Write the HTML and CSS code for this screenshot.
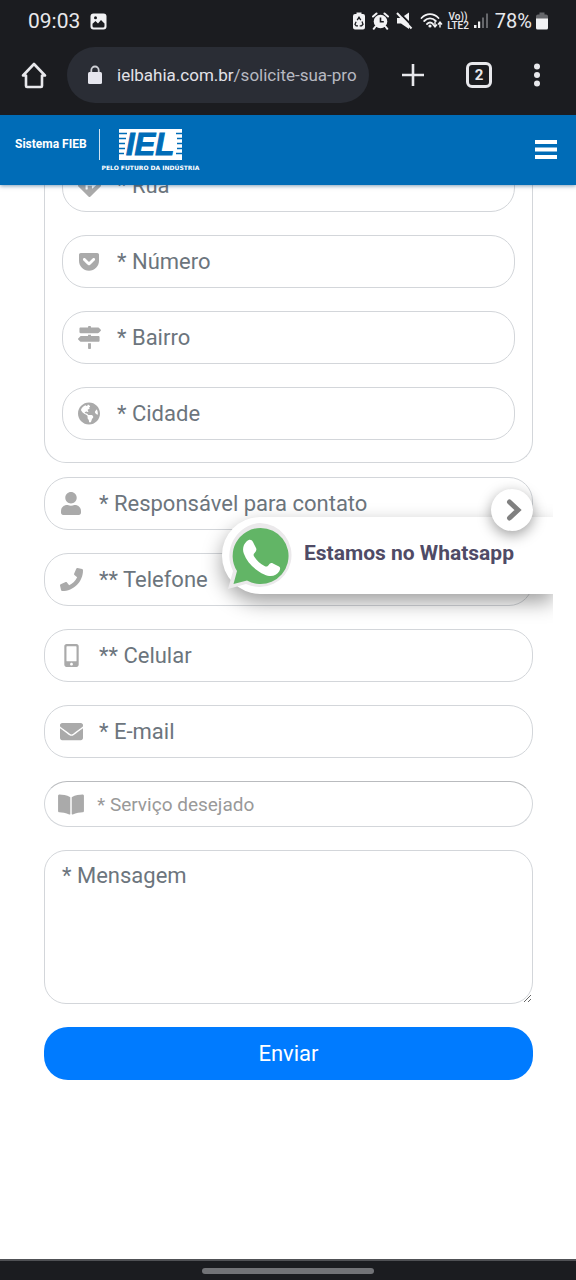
FILE: index.html
```html
<!DOCTYPE html>
<html lang="pt-BR">
<head>
<meta charset="utf-8">
<meta name="viewport" content="width=device-width, initial-scale=1">
<title>Solicite sua proposta</title>
<link rel="stylesheet" href="styles.css">
</head>
<body>
<div class="chrome">
  <div class="status">
    <span class="clock">09:03</span>
    <svg class="status-photo" width="17" height="17" viewBox="0 0 17 17"><rect x=".5" y=".5" width="16" height="16" rx="3" fill="#f2f2f4"/><path d="M2.500 12.500V10.800L5.500 8l2.500 2.500 3-3.500 3.500 3.500v2.500a1.500 1.500 0 0 1-1.500 1.500H4a1.500 1.500 0 0 1-1.500-1.500z" fill="#1b1c20"/><circle cx="5.500" cy="4.800" r="1.500" fill="#1b1c20"/></svg>
    <div class="status-icons">
      <svg width="12" height="18" viewBox="0 0 12 18"><path d="M3.500 2V.5h5V2H10a2 2 0 0 1 2 2v11.500a2 2 0 0 1-2 2H2a2 2 0 0 1-2-2V4a2 2 0 0 1 2-2z" fill="#f2f2f4"/><path d="M4.200 8.200L6 5.300l1.800 2.900M9 9.600l1 2.700-1.400 1.500H6.700M5 13.800H3.200L2 12.300l1.100-2.500" fill="none" stroke="#1b1c20" stroke-width="1.300"/></svg>
      <svg width="17" height="18" viewBox="0 0 17 18"><circle cx="8.500" cy="9.500" r="6.800" fill="#f2f2f4"/><path d="M1 4.500L4.500 1.500M16 4.500L12.500 1.500M3.500 14.500L1.700 16.800M13.500 14.500l1.800 2.300" stroke="#f2f2f4" stroke-width="2" stroke-linecap="round"/><path d="M8.500 5.500v4.300h3.300" fill="none" stroke="#1b1c20" stroke-width="1.600"/></svg>
      <svg width="17" height="18" viewBox="0 0 17 18"><path d="M1 6h4l8-5.500v16.500l-8-5.500H1z" fill="#f2f2f4"/><path d="M2.500 0L17 14.500" stroke="#1b1c20" stroke-width="2"/><path d="M1 1l14.500 15.500" stroke="#f2f2f4" stroke-width="2"/></svg>
      <svg width="23" height="18" viewBox="0 0 23 18"><g fill="none" stroke="#f2f2f4" stroke-width="1.800" stroke-linecap="round"><path d="M1.500 6C6.500 .8 13.500.8 18.500 6M4.200 9c3.500-3.600 8.100-3.600 11.600 0M7 12c2-2 4-2 6 0"/></g><circle cx="10" cy="14" r="1.600" fill="#f2f2f4"/><path d="M15 9.500v5M13 12.500l2 2.500 2-2.500M20 15.500v-5M18 12.500l2-2.500 2 2.500" fill="none" stroke="#f2f2f4" stroke-width="1.400"/></svg>
      <span class="volte"><span>Vo))</span><span>LTE2</span></span>
      <svg width="16" height="18" viewBox="0 0 16 18"><path d="M1 13h2.500v3H1zM5 9.500h2.200V16H5z" fill="#f2f2f4"/><path d="M9 5.500h2V16H9zM13 1.500h2V16h-2z" fill="#66676b"/></svg>
    </div>
    <span class="battery">78%</span>
    <svg width="12" height="18" viewBox="0 0 12 18"><path d="M3.500 2.500V.5h5v2H10a2 2 0 0 1 2 2V7H0V4.500a2 2 0 0 1 2-2z" fill="#66676b"/><path d="M0 6.500h12V16a1.500 1.500 0 0 1-1.500 1.500h-9A1.500 1.500 0 0 1 0 16z" fill="#f2f2f4"/></svg>
  </div>
  <div class="toolbar">
    <button type="button" aria-label="Página inicial"><svg width="28" height="28" viewBox="0 0 28 28"><path d="M3 14.500L14 3l11 11.500h-3V25a1 1 0 0 1-1 1H7a1 1 0 0 1-1-1V14.500z" fill="none" stroke="#e8e8ec" stroke-width="2.600" stroke-linejoin="round"/></svg></button>
    <div class="address">
      <svg width="16" height="20" viewBox="0 0 16 20"><path d="M4.300 8V5.200a3.700 3.700 0 0 1 7.400 0V8" fill="none" stroke="#cfd0d6" stroke-width="1.800"/><rect x="1" y="7" width="14" height="12" rx="1.500" fill="#e6e6ee"/></svg>
      <span class="url">ielbahia.com.br<span class="path">/solicite-sua-pro</span></span>
    </div>
    <div class="actions">
      <button type="button" aria-label="Nova guia"><svg width="24" height="24" viewBox="0 0 24 24"><path d="M12 1v22M1 12h22" stroke="#e8e8ec" stroke-width="2.600"/></svg></button>
      <button class="tabs" type="button" aria-label="2 guias abertas">2</button>
      <button type="button" aria-label="Mais opções"><svg width="8" height="24" viewBox="0 0 8 24"><g fill="#e8e8ec"><circle cx="4" cy="3.500" r="3"/><circle cx="4" cy="12" r="3"/><circle cx="4" cy="20.500" r="3"/></g></svg></button>
    </div>
  </div>
</div>

<header class="site-header">
  <a class="brand" href="#">
    <span class="system">Sistema FIEB</span>
    <span class="divider"></span>
    <span class="iel">
      <svg width="63" height="31" viewBox="0 0 63 31" role="img" aria-label="IEL"><path d="M0 0h63v31H0z" fill="#fff"/><path d="M0 4.500h8M0 9.500h7M0 14.500h6M0 19.500h6M0 24.500h5M57 4.500h6M58 9.500h5M58 14.500h5M58 19.500h5M57 24.500h6" stroke="#006cb7" stroke-width="1.600"/><text class="iel-letters" x="7" y="26">IEL</text></svg>
      <span class="tagline">PELO FUTURO DA INDÚSTRIA</span>
    </span>
  </a>
  <button type="button" aria-label="Menu"><svg width="22" height="20" viewBox="0 0 22 20"><path d="M0 2h22M0 9.500h22M0 17h22" stroke="#fff" stroke-width="4"/></svg></button>
</header>

<main class="page">
  <form class="form">
    <fieldset class="group">
      <label class="field"><span class="icon"><svg width="23" height="23" viewBox="0 0 512 512"><path d="M502.600 233.300L278.700 9.400a32 32 0 0 0-45.300 0L9.400 233.300a32 32 0 0 0 0 45.300l223.900 224a32 32 0 0 0 45.300 0l224-224a32 32 0 0 0 0-45.300zM408 243l-84 78c-5 5-14 1-14-6v-53h-94v74c0 5-3 8-8 8h-32c-5 0-8-3-8-8v-90c0-18 14-32 32-32h110v-54c0-7 8-11 14-6l84 78c3 3 3 8 0 11z"/></svg></span><input type="text" placeholder="* Rua" aria-label="Rua"></label>
      <label class="field"><span class="icon"><svg width="20" height="23" viewBox="0 0 448 512"><path d="M407.600 64h-367C18.500 64 0 82.500 0 104.600v135.200C0 364.500 99.700 464 224.200 464c124 0 223.800-99.500 223.800-224.200V104.600c0-22.400-17.700-40.600-40.400-40.600zm-162 268.500c-12.400 11.800-31.400 11.100-42.400 0C89.500 223.600 88.300 227.400 88.300 209.300c0-16.900 13.800-30.700 30.700-30.700 17 0 16.100 3.800 105.200 89.300 90.600-86.900 88.600-89.300 105.500-89.300 16.900 0 30.700 13.800 30.700 30.700 0 17.800-2.900 15.700-114.800 123.200z"/></svg></span><input type="text" placeholder="* Número" aria-label="Número"></label>
      <label class="field"><span class="icon"><svg width="23" height="23" viewBox="0 0 512 512"><path d="M507.310 84.690L464 41.370c-6-6-14.140-9.370-22.630-9.370H288V16c0-8.840-7.160-16-16-16h-32c-8.840 0-16 7.160-16 16v16H56c-13.250 0-24 10.750-24 24v80c0 13.250 10.750 24 24 24h385.370c8.490 0 16.620-3.370 22.630-9.370l43.310-43.310c6.250-6.260 6.250-16.380 0-22.630zM224 496c0 8.840 7.160 16 16 16h32c8.840 0 16-7.160 16-16V384h-64v112zm232-272H288v-32h-64v32H70.630c-8.490 0-16.620 3.370-22.630 9.370L4.690 276.690c-6.250 6.250-6.250 16.380 0 22.630L48 342.630c6 6 14.140 9.370 22.630 9.370H456c13.250 0 24-10.750 24-24v-80c0-13.250-10.750-24-24-24z"/></svg></span><input type="text" placeholder="* Bairro" aria-label="Bairro"></label>
      <label class="field"><span class="icon"><svg width="22" height="23" viewBox="0 0 496 512"><path d="M248 8C111.030 8 0 119.030 0 256s111.030 248 248 248 248-111.030 248-248S384.970 8 248 8zm82.290 357.600c-3.900 3.880-7.990 7.950-11.310 11.280-2.990 3-5.100 6.700-6.170 10.710-1.510 5.660-2.730 11.380-4.770 16.870l-17.390 46.850c-13.760 3-28 4.690-42.650 4.690v-27.380c1.690-12.620-7.640-36.260-22.630-51.250-6-6-9.370-14.140-9.370-22.630v-32.010c0-11.640-6.270-22.340-16.460-27.970-14.370-7.950-34.810-19.060-48.810-26.110-11.480-5.780-22.100-13.140-31.650-21.750l-.8-.72a114.792 114.792 0 0 1-18.060-20.740c-9.380-13.770-24.660-36.420-34.590-51.140 20.470-45.500 57.360-82.040 103.200-101.890l24.010 12.010C203.480 89.740 216 82.010 216 70.110v-11.300c7.990-1.290 16.120-2.110 24.390-2.420l28.300 28.300c6.250 6.250 6.250 16.380 0 22.630L264 112l-10.340 10.340c-3.120 3.120-3.120 8.190 0 11.310l4.690 4.690c3.120 3.120 3.120 8.190 0 11.310l-8 8a8.008 8.008 0 0 1-5.660 2.340h-8.990c-2.080 0-4.080.81-5.580 2.270l-9.920 9.650a8.008 8.008 0 0 0-1.580 9.310l15.590 31.190c2.660 5.320-1.210 11.580-7.150 11.580h-5.640c-1.930 0-3.790-.7-5.240-1.960l-9.280-8.060a16.017 16.017 0 0 0-15.550-3.100l-31.170 10.390a11.950 11.950 0 0 0-8.170 11.340c0 4.530 2.560 8.660 6.610 10.690l11.080 5.540c9.410 4.710 19.790 7.160 30.310 7.160s22.590 27.290 32 32h66.750c8.490 0 16.620 3.370 22.630 9.370l13.690 13.690a30.503 30.503 0 0 1 8.930 21.570 46.536 46.536 0 0 1-13.720 32.980zM417 274.250c-5.790-1.450-10.840-5-14.150-9.970l-17.980-26.970a23.970 23.970 0 0 1 0-26.620l19.590-29.380c2.320-3.470 5.500-6.290 9.240-8.150l12.980-6.490C440.200 193.590 448 223.870 448 256c0 8.670-.74 17.160-1.820 25.540L417 274.250z"/></svg></span><input type="text" placeholder="* Cidade" aria-label="Cidade"></label>
    </fieldset>

    <label class="field"><span class="icon"><svg width="20" height="23" viewBox="0 0 448 512"><path d="M224 256c70.700 0 128-57.300 128-128S294.700 0 224 0 96 57.300 96 128s57.300 128 128 128zm89.600 32h-16.700c-22.200 10.200-46.900 16-72.900 16s-50.600-5.800-72.900-16h-16.700C60.200 288 0 348.200 0 422.400V464c0 26.500 21.500 48 48 48h352c26.500 0 48-21.500 48-48v-41.600c0-74.200-60.200-134.400-134.400-134.400z"/></svg></span><input type="text" placeholder="* Responsável para contato" aria-label="Responsável para contato"></label>
    <label class="field"><span class="icon"><svg width="23" height="23" viewBox="0 0 512 512"><path d="M493.400 24.600l-104-24c-11.300-2.600-22.900 3.300-27.500 13.900l-48 112c-4.200 9.800-1.400 21.300 6.900 28l60.600 49.600c-36 76.700-98.900 140.500-177.200 177.200l-49.600-60.600c-6.800-8.300-18.200-11.100-28-6.900l-112 48C3.900 366.500-2 378.100.6 389.400l24 104C27.100 504.200 36.700 512 48 512c256.100 0 464-207.500 464-464 0-11.200-7.700-20.900-18.600-23.400z"/></svg></span><input type="tel" placeholder="** Telefone" aria-label="Telefone"></label>
    <label class="field"><span class="icon"><svg width="15" height="23" viewBox="0 0 320 512"><path d="M272 0H48C21.500 0 0 21.500 0 48v416c0 26.500 21.500 48 48 48h224c26.500 0 48-21.500 48-48V48c0-26.500-21.500-48-48-48zM160 480c-17.700 0-32-14.300-32-32s14.300-32 32-32 32 14.300 32 32-14.300 32-32 32zm112-108c0 6.600-5.400 12-12 12H60c-6.600 0-12-5.400-12-12V60c0-6.600 5.400-12 12-12h200c6.600 0 12 5.400 12 12v312z"/></svg></span><input type="tel" placeholder="** Celular" aria-label="Celular"></label>
    <label class="field"><span class="icon"><svg width="23" height="23" viewBox="0 0 512 512"><path d="M502.300 190.800c3.900-3.100 9.700-.2 9.700 4.700V400c0 26.500-21.500 48-48 48H48c-26.500 0-48-21.500-48-48V195.600c0-5 5.700-7.800 9.700-4.700 22.400 17.400 52.100 39.500 154.100 113.600 21.100 15.400 56.700 47.800 92.200 47.600 35.700.3 72-32.800 92.300-47.600 102-74.100 131.600-96.300 154-113.700zM256 320c23.200.4 56.600-29.200 73.400-41.400 132.700-96.300 142.800-104.700 173.400-128.700 5.800-4.500 9.200-11.500 9.200-18.900v-19c0-26.500-21.500-48-48-48H48c-26.500 0-48 21.500-48 48v19c0 7.400 3.400 14.300 9.200 18.900 30.600 23.900 40.700 32.400 173.400 128.700 16.800 12.200 50.200 41.800 73.400 41.400z"/></svg></span><input type="email" placeholder="* E-mail" aria-label="E-mail"></label>
    <label class="field field-select"><span class="icon"><svg width="26" height="23" viewBox="0 0 576 512"><path d="M542.220 32.050c-54.800 3.110-163.720 14.430-230.960 55.590-4.640 2.840-7.270 7.890-7.270 13.170v363.870c0 11.550 12.630 18.850 23.280 13.490 69.180-34.820 169.230-44.320 218.700-46.920 16.890-.89 30.020-14.430 30.020-30.660V62.750c.01-17.710-15.350-31.740-33.770-30.700zM264.730 87.640C197.500 46.480 88.580 35.170 33.780 32.050 15.360 31.010 0 45.040 0 62.750V400.600c0 16.240 13.130 29.780 30.020 30.660 49.490 2.600 149.590 12.110 218.770 46.950 10.620 5.350 23.210-1.940 23.210-13.460V100.630c0-5.290-2.620-10.140-7.270-12.990z"/></svg></span><select aria-label="Serviço desejado"><option>* Serviço desejado</option></select></label>
    <textarea class="message" placeholder="* Mensagem" aria-label="Mensagem"></textarea>
    <button class="submit" type="submit">Enviar</button>
  </form>

  <aside class="whatsapp">
    <a class="whatsapp-card" href="#">
      <svg width="71" height="76" viewBox="0 0 71 76"><path d="M38 5a32 32 0 1 1-14 61L6 71l5-18A33 33 0 0 1 38 5z" fill="#ebe9eb"/><path d="M38.500 10a28 28 0 1 1-13.500 52.500L11.500 66l3.500-13A28 28 0 0 1 38.500 10z" fill="#62b566"/><path d="M24.500 23.500c2.500-2.500 5-2.500 6.500.5l3 6c.8 1.800.3 3-1 4.500-1.800 2-1.800 2.500-.5 4.500 2.500 4 6 7 10 9 1.800 1 2.800.8 4-.8 1.500-2 2.500-2.800 4.500-1.800l6 3.200c1.600.9 1.300 2.900.3 4.700-3 5-9 6-15 3.200C32.500 52 25 44.500 21.800 35.500c-1.700-4.800-.3-9 2.700-12z" fill="#fff"/></svg>
      <span>Estamos no Whatsapp</span>
    </a>
    <button class="whatsapp-close" type="button" aria-label="Recolher"><svg width="16" height="22" viewBox="0 0 16 22"><path d="M3.500 3l8.500 8-8.500 8" fill="none" stroke="#808080" stroke-width="5" stroke-linejoin="miter" stroke-linecap="round"/></svg></button>
  </aside>
</main>

<div class="gesture"><span class="pill"></span></div>
</body>
</html>
```
FILE: styles.css
```css
* {
  box-sizing: border-box;
}

body {
  margin: 0;
  min-height: 100vh;
  display: flex;
  flex-direction: column;
  background: #fff;
  font-family: Roboto, "Liberation Sans", sans-serif;
}

button {
  margin: 0;
  padding: 0;
  border: 0;
  background: none;
  font-family: inherit;
}

svg {
  display: block;
  flex: none;
}

a {
  text-decoration: none;
}

/* Phone status bar and browser toolbar */

.chrome {
  position: relative;
  z-index: 3;
  background: #1b1c20;
  color: #e8e8ec;
}

.status {
  display: flex;
  align-items: center;
  height: 42px;
  padding: 0 28px;
}

.clock {
  font-size: 21px;
}

.status-photo {
  margin-left: 10px;
}

.status-icons {
  display: flex;
  align-items: center;
  gap: 7px;
  margin-left: auto;
}

.volte {
  display: flex;
  flex-direction: column;
  align-items: center;
  margin: 0 -3px;
  font-size: 10px;
  line-height: 9px;
  font-weight: 500;
}

.battery {
  margin: 0 4px 0 6px;
  font-size: 20px;
}

.toolbar {
  display: flex;
  align-items: center;
  gap: 19px;
  height: 73px;
  padding: 0 35px 7px 20px;
}

.address {
  display: flex;
  flex: 1;
  align-items: center;
  gap: 14px;
  min-width: 0;
  height: 56px;
  padding: 0 10px 0 20px;
  border-radius: 28px;
  background: #2a2d35;
}

.url {
  overflow: hidden;
  white-space: nowrap;
  font-size: 17px;
  line-height: 24px;
  color: #e2e2e8;
}

.path {
  color: #b7b9c1;
}

.actions {
  display: flex;
  align-items: center;
  gap: 41px;
  padding-left: 13px;
}

.tabs {
  width: 26px;
  height: 26px;
  border: 3px solid #e8e8ec;
  border-radius: 6px;
  color: #e8e8ec;
  font-size: 15px;
  line-height: 20px;
  font-weight: 700;
}

/* Site header */

.site-header {
  position: relative;
  z-index: 2;
  display: flex;
  align-items: center;
  justify-content: space-between;
  height: 70px;
  padding: 0 19px 0 15px;
  background: #006cb7;
  box-shadow: 0 1px 4px rgba(0, 60, 110, .5);
}

.brand {
  display: flex;
  align-items: flex-start;
  color: #fff;
}

.system {
  font-family: Roboto, sans-serif;
  font-size: 12px;
  line-height: 31px;
  font-weight: 700;
}

.divider {
  width: 1px;
  height: 31px;
  margin-left: 12px;
  background: #cfe2f1;
}

.iel {
  display: flex;
  flex-direction: column;
  align-items: center;
  gap: 4px;
  margin-left: 2px;
}

.iel-letters {
  font: italic 700 31px "Liberation Sans", sans-serif;
  fill: #006cb7;
  stroke: #006cb7;
  stroke-width: 1px;
}

.tagline {
  font-family: "DejaVu Sans", sans-serif;
  font-size: 6px;
  line-height: 8px;
  font-weight: 700;
}

/* Form */

.page {
  position: relative;
  flex: 1;
  padding: 0 43px 0 44px;
}

.form {
  display: flex;
  flex-direction: column;
  gap: 23px;
  margin-top: -26px;
}

.group {
  display: flex;
  flex-direction: column;
  gap: 23px;
  min-width: 0;
  margin: 0 0 -9px;
  padding: 0 17px 22px;
  border: 1px solid #d3d6da;
  border-top: 0;
  border-radius: 0 0 22px 22px;
}

.field {
  display: flex;
  align-items: center;
  height: 53px;
  border: 1px solid #d3d6da;
  border-radius: 24px;
  background: #fff;
}

.icon {
  display: flex;
  flex: none;
  justify-content: center;
  width: 52px;
  fill: #aaa;
}

.field input,
.field select {
  flex: 1;
  min-width: 0;
  height: 100%;
  margin: 0;
  padding: 0 20px 0 2px;
  border: 0;
  border-radius: 24px;
  outline: 0;
  background: transparent;
  color: #6c757d;
  font-family: inherit;
  font-size: 22px;
}

.field-select {
  height: 46px;
  border-top-color: #b9bbbe;
}

.field select {
  padding-left: 0;
  appearance: none;
  color: #999;
  font-size: 19px;
}

input::placeholder,
textarea::placeholder {
  color: #6c757d;
  opacity: 1;
}

.message {
  display: block;
  height: 154px;
  margin: 0;
  padding: 8px 17px;
  border: 1px solid #d3d6da;
  border-radius: 22px;
  outline: 0;
  font-family: inherit;
  font-size: 22px;
  line-height: 34px;
  resize: vertical;
}

.submit {
  height: 53px;
  border-radius: 24px;
  background: #007bff;
  color: #fff;
  font-size: 22px;
}

/* Floating WhatsApp card */

.whatsapp {
  position: absolute;
  top: 332px;
  right: 23px;
  z-index: 1;
  clip-path: inset(-50px 0 -50px -50px);
}

.whatsapp-card {
  display: flex;
  align-items: center;
  gap: 11px;
  width: 331px;
  height: 77px;
  border-radius: 38px 0 0 38px;
  background: #fff;
  box-shadow: 0 8px 20px rgba(0, 0, 0, .38);
  color: #4f4b66;
  font-size: 21px;
  font-weight: 700;
}

.whatsapp-card span {
  padding-bottom: 5px;
}

.whatsapp-close {
  position: absolute;
  top: -28px;
  right: 20px;
  display: flex;
  align-items: center;
  justify-content: center;
  width: 42px;
  height: 42px;
  padding-left: 4px;
  border-radius: 50%;
  background: #fff;
  box-shadow: 0 4px 14px rgba(0, 0, 0, .38);
}

/* Gesture bar */

.gesture {
  display: flex;
  justify-content: center;
  align-items: center;
  height: 21px;
  border-top: 2px solid #505155;
  background: #1b1c20;
}

.pill {
  width: 30%;
  height: 6px;
  border-radius: 3px;
  background: #727377;
}
```
